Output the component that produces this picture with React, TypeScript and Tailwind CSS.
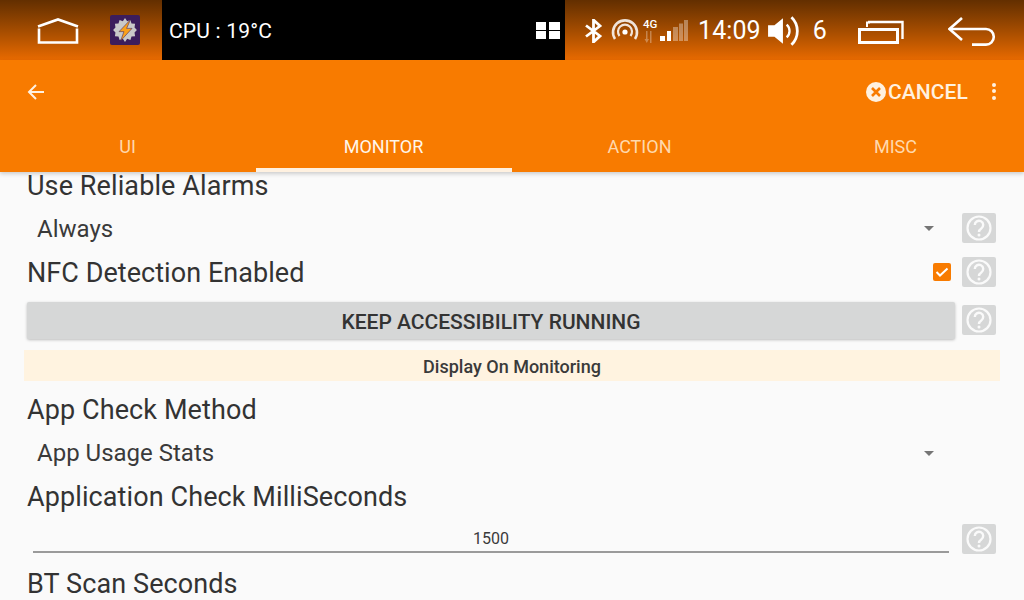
import React from "react";

const font = { fontFamily: "Roboto, sans-serif" };

function Help() {
  return (
    <div className="w-[34px] h-[30px] shrink-0 bg-[#d6d7d7] rounded-[2px] flex items-center justify-center">
      <svg width="26" height="26" viewBox="0 0 26 26" fill="none" stroke="#fafafa" strokeWidth="2.2">
        <circle cx="13" cy="13" r="11.5" />
        <path d="M8.800 10a4.200 4.200 0 1 1 6.500 3.500c-1.500 1-2.300 1.700-2.300 3.400" strokeWidth="2.400" />
        <circle cx="13" cy="20" r="1.500" fill="#fafafa" stroke="none" />
      </svg>
    </div>
  );
}

function Caret() {
  return <div className="w-0 h-0 border-l-[5px] border-r-[5px] border-t-[5px] border-l-transparent border-r-transparent border-t-[#757575]" />;
}

function Label({ children, h }: { children: React.ReactNode; h: string }) {
  return <div className={`${h} flex items-center pl-[27px] text-[27px] leading-[28px] tracking-[0.1px] text-[#333]`}>{children}</div>;
}

function StatusIcons() {
  return (
    <div className="flex-1 flex items-center bg-gradient-to-b from-[#632f00] to-[#e86a00] text-white pt-[1px]">
      <svg className="ml-[20px]" width="18" height="24" viewBox="0 0 18 24" fill="none" stroke="#fff" strokeWidth="2.800">
        <path d="M1 6.500 15 17 8.500 23V1L15 7 1 17.500" />
      </svg>
      <svg className="ml-[8px]" width="28" height="26" viewBox="0 0 28 26" fill="none" stroke="#fff">
        <path d="M4 21a12 12 0 1 1 20 0" strokeWidth="2.600" opacity="0.85" />
        <path d="M8.500 18a7 7 0 1 1 11 0" strokeWidth="2.200" opacity="0.85" />
        <circle cx="14" cy="14" r="2.600" fill="#fff" stroke="none" />
      </svg>
      <div className="relative w-[14px] h-[28px] ml-[4px]">
        <span className="absolute left-0 top-[1px] text-[11.500px] leading-[12px] font-medium">4G</span>
        <svg className="absolute left-[1px] top-[14px]" width="10" height="14" viewBox="0 0 10 14" fill="#fff" opacity="0.3">
          <path d="M2 0h1.500v8H5l-2.200 4L.5 8H2zM6 0h1.500v12H6z" />
        </svg>
      </div>
      <svg className="ml-[3px] mt-[1px]" width="28" height="22" viewBox="0 0 28 22" fill="#fff">
        <rect x="0" y="16" width="5" height="5" />
        <rect x="7" y="11" width="4" height="10" />
        <rect x="13" y="7" width="5" height="14" opacity="0.35" />
        <rect x="19" y="3.500" width="4" height="17.500" opacity="0.35" />
        <rect x="24" y="0" width="4" height="21" opacity="0.35" />
      </svg>
      <span className="ml-[10px] text-[25px] tracking-[0.1px] leading-none">14:09</span>
      <svg className="ml-[6px]" width="34" height="34" viewBox="0 0 32 32" fill="none" stroke="#fff">
        <path d="M1 10.500h6L15 4v24l-8-6.500H1z" fill="#fff" stroke="none" />
        <path d="M18.500 10a8 8 0 0 1 0 12" strokeWidth="2.200" />
        <path d="M23 3a18 18 0 0 1 0 26" strokeWidth="2.600" />
      </svg>
      <span className="ml-[12px] text-[25px] leading-none">6</span>
      <svg className="ml-[31px]" width="46" height="28" viewBox="0 0 46 28" fill="none" stroke="#fff" strokeWidth="3">
        <path d="M1.500 12.500h38v13H1.500z" />
        <path d="M10 5h34.500v17" strokeWidth="2.400" />
        <path d="M9 10V5.500h3" strokeWidth="2" />
      </svg>
      <svg className="ml-[44px]" width="48" height="30" viewBox="0 0 48 30" fill="none" stroke="#fff" strokeWidth="2.600">
        <path d="M14 2 1.500 13 14 24" />
        <path d="M1.500 13h36.500a7.800 7.800 0 0 1 0 15.600H24" />
      </svg>
    </div>
  );
}

export default function App() {
  return (
    <div style={font} className="w-[1024px] h-[600px] overflow-hidden flex flex-col bg-[#fafafa]">
      <div className="h-[60px] shrink-0 flex">
        <div className="w-[162px] flex items-center bg-gradient-to-b from-[#632f00] to-[#e86a00]">
          <svg className="ml-[37px] mt-[2px]" width="42" height="26" viewBox="0 0 42 26" fill="none" stroke="#fff" strokeWidth="2.600">
            <path d="M1 8.500 21 1.500l20 7" />
            <path d="M2 10.500V24.500h38V10.500" />
          </svg>
          <div className="ml-[31px] w-[30px] h-[30px] rounded-[2px] bg-[#3b1d5c] flex items-center justify-center">
            <svg width="26" height="26" viewBox="0 0 24 24">
              <path d="m12 1 2 3 3-1.200 1 3.200 3.300.3-.5 3.400L23 12l-2.200 2.300.5 3.400-3.300.3-1 3.200-3-1.200-2 3-2-3-3 1.200-1-3.200-3.300-.3.5-3.400L1 12l2.200-2.300-.5-3.400L6 6l1-3.200L10 4z" fill="#c9c9c9" />
              <path d="M17 2.500 6.500 13.500h4.500L8 22 18.500 10.500h-5z" fill="#f9a01b" stroke="#3b1d5c" strokeWidth="0.500" />
            </svg>
          </div>
        </div>
        <div className="w-[403px] bg-black flex items-center justify-between text-white pl-[7px] pr-[5px]">
          <span className="text-[21px] tracking-[0.2px] leading-none pt-[2px]">CPU : 19°C</span>
          <div className="grid grid-cols-2 gap-x-[2px] gap-y-[1px]">
            <div className="w-[10px] h-[8px] bg-white" />
            <div className="w-[11px] h-[8px] bg-white" />
            <div className="w-[10px] h-[8px] bg-white" />
            <div className="w-[11px] h-[8px] bg-white" />
          </div>
        </div>
        <StatusIcons />
      </div>

      <div className="h-[112px] shrink-0 bg-[#f87b00] flex flex-col relative z-10 shadow-[0_2px_4px_rgba(0,0,0,0.18)]">
        <div className="h-[62px] flex items-center text-[#fff1e0]">
          <svg className="ml-[26px] mt-[1px]" width="20" height="20" viewBox="0 0 20 20" fill="none" stroke="#fff1e0" strokeWidth="2">
            <path d="M18 10H3M10 3l-7 7 7 7" />
          </svg>
          <div className="ml-auto flex items-center pt-[1px]">
            <svg width="20" height="20" viewBox="0 0 20 20">
              <circle cx="10" cy="10" r="10" fill="#fff1e0" />
              <path d="m6 6 8 8M14 6l-8 8" stroke="#f87b00" strokeWidth="2.600" />
            </svg>
            <span className="ml-[2px] text-[21px] tracking-[0.1px] font-medium leading-none pt-[2px]">CANCEL</span>
          </div>
          <div className="ml-[24px] mr-[28px] flex flex-col gap-[2.500px]">
            <div className="w-[4px] h-[4px] rounded-full bg-[#fff1e0]" />
            <div className="w-[4px] h-[4px] rounded-full bg-[#fff1e0]" />
            <div className="w-[4px] h-[4px] rounded-full bg-[#fff1e0]" />
          </div>
        </div>
        <div className="flex-1 flex text-[18px] text-center">
          {["UI", "MONITOR", "ACTION", "MISC"].map((t, i) => (
            <div
              key={t}
              className={`w-[256px] flex items-center justify-center pt-[2px] pr-[1px] border-b-[4px] ${i === 1 ? "border-[#fff1e0] text-[#fff6ea]" : "border-transparent text-[#ffd9ad]"}`}
            >
              {t}
            </div>
          ))}
        </div>
      </div>

      <div className="flex-1 flex flex-col">
        <Label h="h-[28px] shrink-0">Use Reliable Alarms</Label>
        <div className="h-[44px] shrink-0 mt-[6px] flex items-center pl-[37px] pr-[28px] text-[24px] text-[#3a3a3a]">
          <span className="pt-[2px]">Always</span>
          <div className="ml-auto mr-[28px]"><Caret /></div>
          <Help />
        </div>
        <div className="h-[44px] shrink-0 flex items-center pl-[27px] pr-[28px] text-[27px] tracking-[0.05px] text-[#333]">
          <span className="pt-[3px]">NFC Detection Enabled</span>
          <div className="ml-auto mr-[11px] w-[18px] h-[18px] rounded-[2px] bg-[#f87b00] flex items-center justify-center">
            <svg width="14" height="14" viewBox="0 0 14 14" fill="none" stroke="#fff" strokeWidth="2"><path d="m1.500 7 3.500 3.500 7.500-7" /></svg>
          </div>
          <Help />
        </div>
        <div className="h-[37px] shrink-0 mt-[8px] flex items-start pl-[27px] pr-[28px] gap-[7px]">
          <div className="flex-1 h-[37px] rounded-[2px] bg-[#d6d7d7] shadow-[0_1px_3px_rgba(0,0,0,0.25)] flex items-center justify-center text-[21px] font-medium text-[#333] pt-[4px]">
            KEEP ACCESSIBILITY RUNNING
          </div>
          <div className="mt-[3px]"><Help /></div>
        </div>
        <div className="h-[31px] shrink-0 mt-[11px] mx-[24px] bg-[#fff3e0] flex items-center justify-center text-[18px] font-medium text-[#3a3a3a] pt-[2px]">
          Display On Monitoring
        </div>
        <Label h="h-[30px] shrink-0 mt-[14px]">App Check Method</Label>
        <div className="h-[44px] shrink-0 mt-[6px] flex items-center pl-[37px] pr-[62px] text-[24px] text-[#3a3a3a]">
          <span>App Usage Stats</span>
          <div className="ml-auto mr-[28px]"><Caret /></div>
        </div>
        <Label h="h-[30px] shrink-0 mt-[7px]">Application Check MilliSeconds</Label>
        <div className="h-[40px] shrink-0 mt-[2px] flex items-start pl-[33px] pr-[28px] gap-[13px]">
          <div className="flex-1 h-[39px] border-b-2 border-[#9a9a9a] flex items-center justify-center text-[16px] text-[#3a3a3a] pt-[13px]">
            1500
          </div>
          <div className="mt-[10px]"><Help /></div>
        </div>
        <Label h="h-[30px] shrink-0 mt-[15px]">BT Scan Seconds</Label>
      </div>
    </div>
  );
}
